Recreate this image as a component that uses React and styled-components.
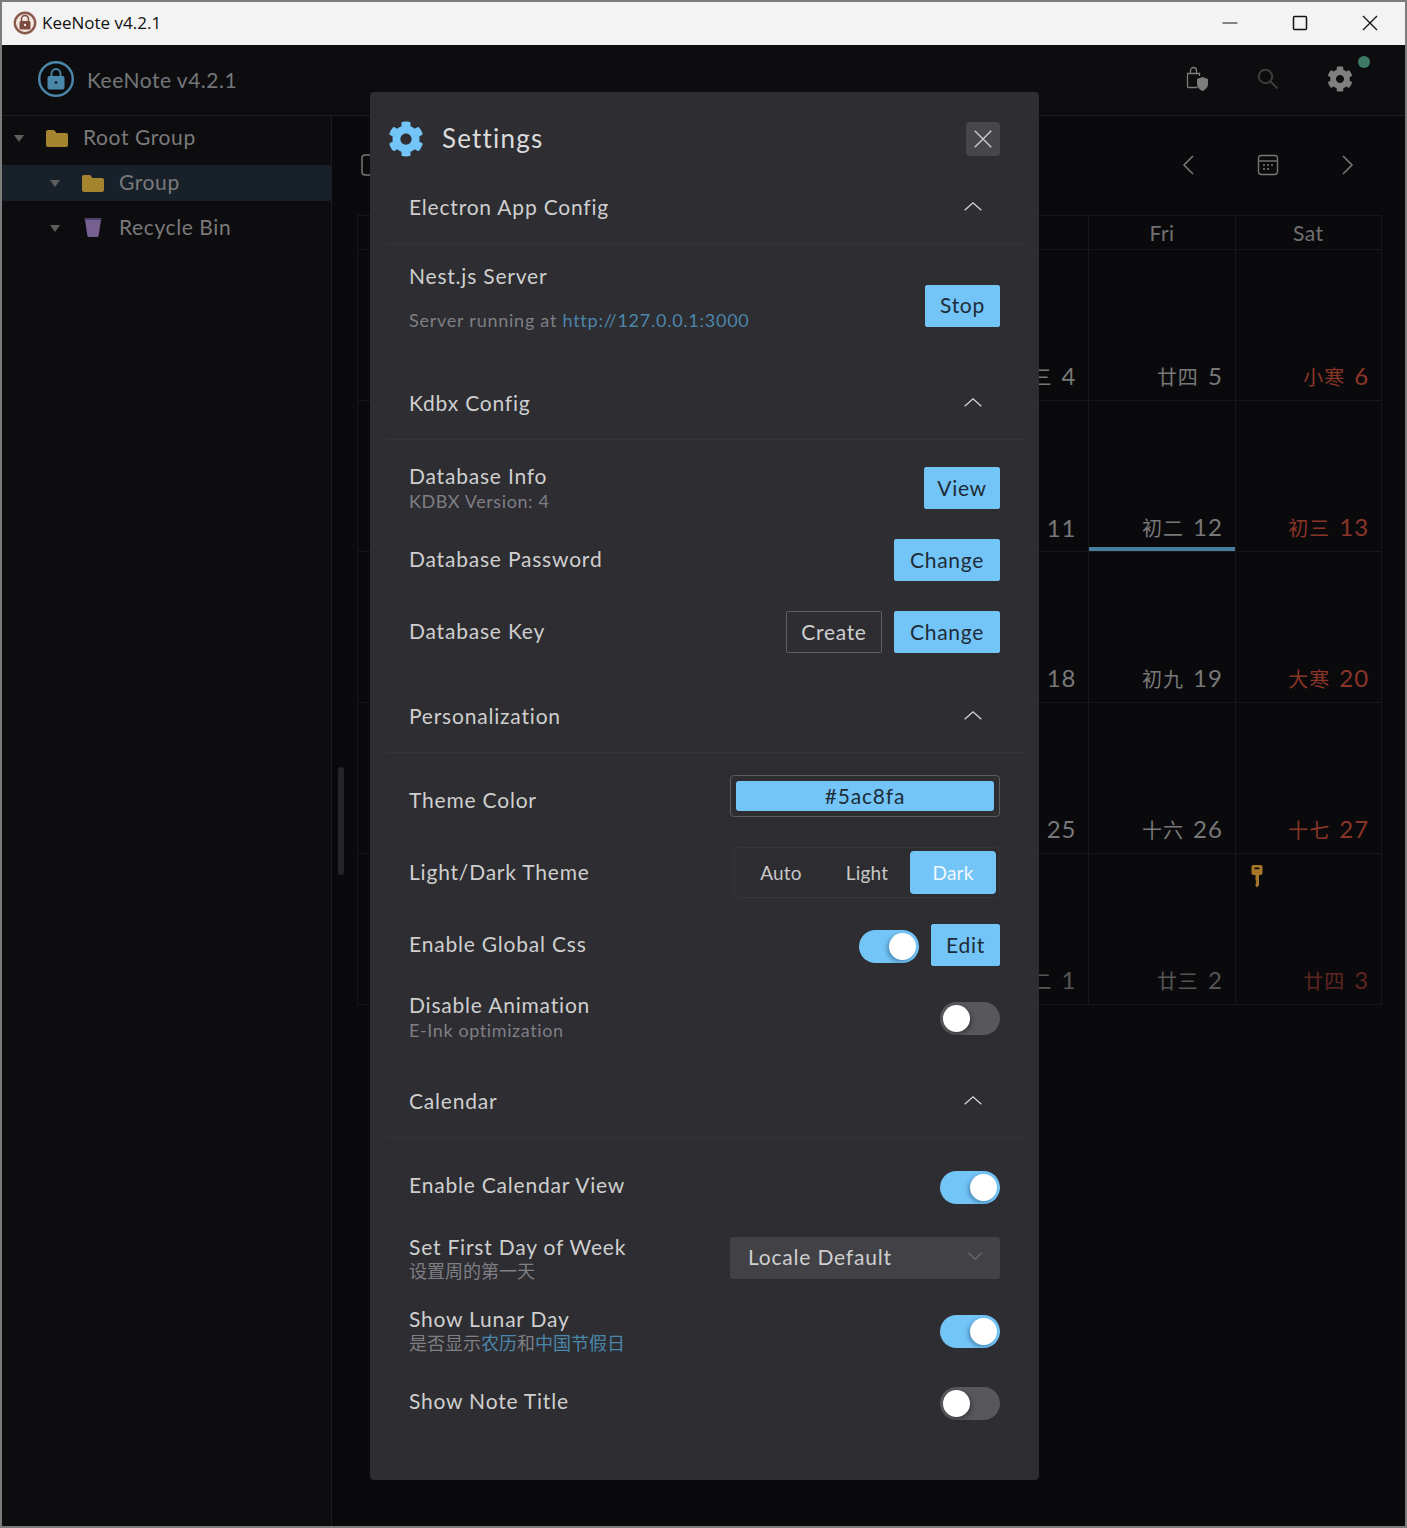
import React from 'react';
import styled, { createGlobalStyle } from 'styled-components';
import { AiOutlineSearch } from 'react-icons/ai';
import { FaCog } from 'react-icons/fa';

const FONT = `Lato, "Noto Sans CJK SC", sans-serif`;

const Global = createGlobalStyle`
  html, body { margin: 0; padding: 0; background: #0a0a0d; }
  * { box-sizing: border-box; }
`;

const Frame = styled.div`
  position: relative;
  width: 1407px;
  height: 1528px;
  border: 2px solid #7c7c7c;
  display: flex;
  flex-direction: column;
  overflow: hidden;
  font-family: ${FONT};
  background: #0a0a0d;
`;

const TitleBar = styled.div`
  height: 43px;
  flex: none;
  background: #f3f3f3;
  display: flex;
  align-items: center;
  padding: 0 0 2px 11px;
  color: #111;
  font: 17px "Open Sans", sans-serif;
`;
const TitleIcon = styled.svg`
  width: 24px;
  height: 24px;
  margin-right: 5px;
`;
const WinControls = styled.div`
  margin-left: auto;
  display: flex;
`;
const WinButton = styled.div`
  width: 70px;
  height: 41px;
  display: flex;
  align-items: center;
  justify-content: center;
  svg { display: block; }
`;

const AppHeader = styled.header`
  height: 71px;
  flex: none;
  background: #0d0d0f;
  border-bottom: 1px solid #1c1c1e;
  display: flex;
  align-items: center;
  padding: 0 40px 2px 35px;
`;
const Brand = styled.div`
  display: flex;
  align-items: center;
  gap: 12px;
  font-size: 21px;
  letter-spacing: 0.5px;
  color: #747779;
`;
const HeaderIcons = styled.div`
  margin-left: auto;
  display: flex;
  align-items: center;
  gap: 46px;
  margin-right: 12px;
`;
const HeaderIconBox = styled.div`
  position: relative;
  width: 26px;
  height: 26px;
  display: flex;
  align-items: center;
  justify-content: center;
  color: ${p => p.$color};
  font-size: ${p => p.$size}px;
`;
const StatusDot = styled.span`
  position: absolute;
  top: -10px;
  right: -17px;
  width: 12px;
  height: 12px;
  border-radius: 50%;
  background: #3d7a63;
`;

const Body = styled.div`
  flex: 1;
  display: flex;
  min-height: 0;
`;
const Sidebar = styled.aside`
  width: 330px;
  flex: none;
  background: #0d0d0f;
  border-right: 1px solid #1c1c1e;
  padding-top: 4px;
  display: flex;
  flex-direction: column;
  gap: 9px;
`;
const TreeRow = styled.div`
  height: 36px;
  display: flex;
  align-items: center;
  padding-left: ${p => 12 + p.$level * 36}px;
  background: ${p => (p.$active ? '#18202a' : 'transparent')};
  border-radius: 0 2px 2px 0;
  color: #7a7a7a;
  font-size: 21px;
  letter-spacing: 0.6px;
  line-height: 34px;
`;
const TreeLabel = styled.span`
  margin-top: -3px;
`;
const TreeArrow = styled.span`
  width: 0;
  height: 0;
  border-left: 5px solid transparent;
  border-right: 5px solid transparent;
  border-top: 7px solid #5e5e5e;
  margin-right: 21px;
`;
const TreeIcon = styled.svg`
  width: 24px;
  height: 22px;
  margin-right: 14px;
  flex: none;
`;

const Handle = styled.div`
  position: absolute;
  left: 336px;
  top: 765px;
  width: 6px;
  height: 108px;
  border-radius: 3px;
  background: #262628;
`;

const Main = styled.main`
  flex: 1;
  min-width: 0;
  padding: 0 23px 0 25px;
`;
const CalToolbar = styled.div`
  height: 99px;
  display: flex;
  align-items: center;
  justify-content: space-between;
  padding: 0 23px 2px 3px;
  color: #767676;
`;
const CalNav = styled.div`
  display: flex;
  align-items: center;
  gap: 55px;
`;
const NavIcon = styled.svg`
  width: 24px;
  height: 24px;
  display: block;
`;
const Grid = styled.div`
  display: grid;
  grid-template-columns: repeat(7, 1fr);
  grid-template-rows: 34px repeat(5, 151px);
  border-left: 1px solid #17171a;
  border-top: 1px solid #17171a;
`;
const WeekDay = styled.div`
  display: flex;
  align-items: center;
  justify-content: center;
  padding-bottom: 1px;
  border-right: 1px solid #17171a;
  border-bottom: 1px solid #17171a;
  color: #707070;
  font-size: 21px;
  letter-spacing: 0.5px;
`;
const Cell = styled.div`
  position: relative;
  display: flex;
  flex-direction: column;
  padding: 10px 12px 8px 15px;
  border-right: 1px solid #17171a;
  border-bottom: 1px solid #17171a;
`;
const TodayBar = styled.span`
  position: absolute;
  left: 0;
  right: 0;
  bottom: 0;
  height: 4px;
  background: #477d9f;
`;
const DateLabel = styled.div`
  margin-top: auto;
  text-align: right;
  font-size: 24px;
  line-height: 30px;
  letter-spacing: 0.9px;
  color: ${p => (p.$weekend ? (p.$dim ? '#5e2620' : '#8b3528') : p.$dim ? '#565656' : '#787878')};
`;
const Lunar = styled.span`
  font-size: 20px;
  margin-right: 9px;
  letter-spacing: 1px;
`;
const KeyIcon = styled.svg`
  width: 12px;
  height: 24px;
  display: block;
`;

const Modal = styled.section`
  position: absolute;
  left: 368px;
  top: 90px;
  width: 669px;
  height: 1388px;
  background: #2d2d32;
  border-radius: 4px;
  padding: 0 15px;
  color: #cfcfcf;
  font-size: 21px;
  letter-spacing: 0.8px;
`;
const ModalHead = styled.div`
  display: flex;
  align-items: center;
  height: 79px;
  padding: 30px 24px 15px 3px;
`;
const ModalTitle = styled.h2`
  margin: -2px 0 0 18px;
  font-weight: 400;
  font-size: 26px;
  letter-spacing: 1.2px;
  color: #dcdcdc;
`;
const GearBlue = styled(FaCog)`
  color: #74c5f7;
  font-size: 36px;
`;
const CloseBtn = styled.button`
  margin-left: auto;
  width: 34px;
  height: 34px;
  border: 0;
  border-radius: 4px;
  background: #46464b;
  display: flex;
  align-items: center;
  justify-content: center;
  padding: 0;
`;
const SectionHead = styled.div`
  height: 73px;
  border-bottom: 1px solid #343438;
  display: flex;
  align-items: center;
  justify-content: space-between;
  padding: 0 41px 1px 24px;
`;
const SectionBody = styled.div`
  padding: 27px 24px 27px 24px;
  display: flex;
  flex-direction: column;
  gap: 30px;
`;
const Row = styled.div`
  height: ${p => p.$h || 42}px;
  display: flex;
  align-items: center;
  justify-content: space-between;
`;
const Labels = styled.div`
  display: flex;
  flex-direction: column;
  margin-bottom: ${p => p.$lift || 0}px;
`;
const Label = styled.div`
  line-height: 24px;
  margin-top: ${p => (p.$plain ? -3 : 0)}px;
`;
const Sub = styled.div`
  font-size: 18px;
  line-height: 22px;
  letter-spacing: ${p => (p.$ls === undefined ? 0.6 : p.$ls)}px;
  color: #7f7f84;
  margin-top: ${p => p.$gap || 2}px;
`;
const Link = styled.span`
  color: #4c86aa;
`;
const Actions = styled.div`
  display: flex;
  align-items: center;
  gap: 12px;
`;
const Button = styled.button`
  height: 42px;
  width: ${p => p.$w}px;
  padding: 0 0 2px;
  border-radius: 2px;
  font: inherit;
  letter-spacing: 0.7px;
  color: ${p => (p.$outline ? '#cfcfcf' : '#1d2c37')};
  background: ${p => (p.$outline ? 'transparent' : '#74c5f7')};
  border: 1px solid ${p => (p.$outline ? '#5d5d62' : '#74c5f7')};
`;
const ColorField = styled.div`
  width: 270px;
  height: 42px;
  margin-top: -10px;
  padding: 5px;
  border: 1px solid #5b5b60;
  border-radius: 4px;
`;
const ColorSwatch = styled.div`
  height: 100%;
  padding-bottom: 2px;
  background: #74c5f7;
  border-radius: 3px;
  color: #1d2c37;
  display: flex;
  align-items: center;
  justify-content: center;
`;
const Segmented = styled.div`
  width: 266px;
  height: 51px;
  flex: none;
  margin: -5px 0 -4px;
  padding: 3px;
  border: 1px solid #36363a;
  border-radius: 4px;
  display: flex;
  background: #2c2c31;
  font-size: 19px;
  letter-spacing: 0.2px;
`;
const Segment = styled.div`
  flex: 1;
  border-radius: 4px;
  display: flex;
  align-items: center;
  justify-content: center;
  background: ${p => (p.$active ? '#74c5f7' : 'transparent')};
  color: ${p => (p.$active ? '#f0f8fd' : '#c8c8c8')};
`;
const Switch = styled.div`
  width: 60px;
  height: 33px;
  margin-top: 3px;
  border-radius: 17px;
  padding: 3px;
  display: flex;
  justify-content: ${p => (p.$on ? 'flex-end' : 'flex-start')};
  background: ${p => (p.$on ? '#74c5f7' : '#57575c')};
`;
const Knob = styled.span`
  width: 27px;
  height: 27px;
  border-radius: 50%;
  background: #fff;
  box-shadow: ${p => (p.$on ? '-2px 2px 4px rgba(0,40,70,.35)' : '2px 2px 4px rgba(0,0,0,.3)')};
`;
const Select = styled.div`
  width: 270px;
  height: 42px;
  border-radius: 3px;
  background: #414146;
  display: flex;
  align-items: center;
  justify-content: space-between;
  padding: 0 17px 4px 18px;
`;

const Stroke = ({ d, size = 24, w = 1.6, color = 'currentColor' }) => (
  <svg width={size} height={size} viewBox="0 0 24 24" fill="none" stroke={color} strokeWidth={w}>
    <path d={d} />
  </svg>
);

const Folder = () => (
  <TreeIcon viewBox="0 0 24 22">
    <path fill="#a5842f" d="M1 5a2 2 0 0 1 2-2h6l2.500 3H21a2 2 0 0 1 2 2v10a2 2 0 0 1-2 2H3a2 2 0 0 1-2-2z" />
  </TreeIcon>
);
const Bin = () => (
  <TreeIcon viewBox="0 0 24 22">
    <path fill="#4f3f6e" d="M3.500 1h17v2h-17z" />
    <path fill="#75608f" d="M4 3h16l-2.300 15.500a2 2 0 0 1-2 1.500H8.300a2 2 0 0 1-2-1.500z" />
  </TreeIcon>
);

const Toggle = ({ on }) => (
  <Switch $on={on}>
    <Knob $on={on} />
  </Switch>
);

const Section = ({ title, children }) => (
  <>
    <SectionHead>
      <span>{title}</span>
      <Stroke d="M2 16 L12 7 L22 16" size={20} w={1.5} color="#d8d8d8" />
    </SectionHead>
    <SectionBody>{children}</SectionBody>
  </>
);

const WEEK = ['Sun', 'Mon', 'Tue', 'Wed', 'Thu', 'Fri', 'Sat'];
const DAYS = [
  ['二十', 31, 1], ['元旦', 1], ['廿一', 2], ['廿二', 3], ['廿三', 4], ['廿四', 5], ['小寒', 6],
  ['廿六', 7], ['廿七', 8], ['廿八', 9], ['廿九', 10], ['', 11], ['初二', 12], ['初三', 13],
  ['初四', 14], ['初五', 15], ['初六', 16], ['初七', 17], ['初八', 18], ['初九', 19], ['大寒', 20],
  ['十一', 21], ['十二', 22], ['十三', 23], ['十四', 24], ['十五', 25], ['十六', 26], ['十七', 27],
  ['十八', 28], ['十九', 29], ['二十', 30], ['廿一', 31], ['廿二', 1, 1], ['廿三', 2, 1], ['廿四', 3, 1],
];

export default function App() {
  return (
    <>
      <Global />
      <Frame>
        <TitleBar>
          <TitleIcon viewBox="0 0 24 24">
            <circle cx="12" cy="12" r="10.200" fill="#f2e6df" stroke="#8a5a4c" strokeWidth="2.400" />
            <path d="M8.500 10V8a3.500 3.500 0 0 1 7 0v2" fill="none" stroke="#7d4c40" strokeWidth="1.500" />
            <rect x="6.500" y="10" width="11" height="8.500" rx="1.500" fill="#7d4c40" />
            <circle cx="12" cy="14" r="1.200" fill="#f2e6df" />
          </TitleIcon>
          KeeNote v4.2.1
          <WinControls>
            <WinButton>
              <svg width="16" height="16" viewBox="0 0 16 16"><path d="M0.500 8h15" stroke="#111" strokeWidth="1" /></svg>
            </WinButton>
            <WinButton>
              <svg width="16" height="16" viewBox="0 0 16 16"><rect x="1.500" y="1.500" width="13" height="13" rx="1" fill="none" stroke="#111" strokeWidth="1.500" /></svg>
            </WinButton>
            <WinButton>
              <svg width="16" height="16" viewBox="0 0 16 16"><path d="M1 1l14 14M15 1L1 15" stroke="#111" strokeWidth="1.300" /></svg>
            </WinButton>
          </WinControls>
        </TitleBar>

        <AppHeader>
          <Brand>
            <svg width="38" height="38" viewBox="0 0 38 38">
              <circle cx="19" cy="19" r="16.800" fill="none" stroke="#4a87ab" strokeWidth="2.400" />
              <path d="M14.500 17v-3.500a4.500 4.500 0 0 1 9 0V17" fill="none" stroke="#4a87ab" strokeWidth="1.800" />
              <rect x="10.500" y="16" width="17" height="13.500" rx="2" fill="#4a87ab" />
              <circle cx="19" cy="22.500" r="1.300" fill="#0d0d0f" />
            </svg>
            KeeNote v4.2.1
          </Brand>
          <HeaderIcons>
            <HeaderIconBox $color="#7c7c7c">
              <svg width="26" height="26" viewBox="0 0 26 26" fill="none">
                <path d="M14.500 21.500H5.500a1 1 0 0 1-1-1V7.500h12V10" stroke="currentColor" strokeWidth="1.300" />
                <path d="M7.500 7.500V4.500a3 3 0 0 1 6 0v3" stroke="currentColor" strokeWidth="1.300" />
                <path fill="currentColor" d="M19.500 11l5.500 2v5c0 3.500-2.500 5.500-5.500 7-3-1.500-5.500-3.500-5.500-7v-5z" />
              </svg>
            </HeaderIconBox>
            <HeaderIconBox $color="#3f3f3f" $size={26}>
              <AiOutlineSearch />
            </HeaderIconBox>
            <HeaderIconBox $color="#808080" $size={26}>
              <FaCog />
              <StatusDot />
            </HeaderIconBox>
          </HeaderIcons>
        </AppHeader>

        <Body>
          <Sidebar>
            <TreeRow $level={0}>
              <TreeArrow />
              <Folder />
              <TreeLabel>Root Group</TreeLabel>
            </TreeRow>
            <TreeRow $level={1} $active>
              <TreeArrow />
              <Folder />
              <TreeLabel>Group</TreeLabel>
            </TreeRow>
            <TreeRow $level={1}>
              <TreeArrow />
              <Bin />
              <TreeLabel>Recycle Bin</TreeLabel>
            </TreeRow>
          </Sidebar>
          <Handle />
          <Main>
            <CalToolbar>
              <NavIcon viewBox="0 0 24 24" fill="none" stroke="currentColor" strokeWidth="1.500">
                <rect x="2" y="2" width="20" height="20" rx="3" />
              </NavIcon>
              <CalNav>
                <NavIcon viewBox="0 0 24 24" fill="none" stroke="currentColor" strokeWidth="1.600">
                  <path d="M16 3 L7 12 L16 21" />
                </NavIcon>
                <NavIcon viewBox="0 0 24 24" fill="none" stroke="currentColor" strokeWidth="1.400">
                  <rect x="2.500" y="2.500" width="19" height="19" rx="3" />
                  <path d="M2.500 8h19" />
                  <g fill="currentColor" stroke="none">
                    <circle cx="8" cy="12" r="1.100" /><circle cx="12" cy="12" r="1.100" /><circle cx="16" cy="12" r="1.100" />
                    <circle cx="8" cy="16" r="1.100" /><circle cx="12" cy="16" r="1.100" />
                  </g>
                </NavIcon>
                <NavIcon viewBox="0 0 24 24" fill="none" stroke="currentColor" strokeWidth="1.600">
                  <path d="M8 3 L17 12 L8 21" />
                </NavIcon>
              </CalNav>
            </CalToolbar>
            <Grid>
              {WEEK.map(w => (
                <WeekDay key={w}>{w}</WeekDay>
              ))}
              {DAYS.map(([lunar, n, dim], i) => (
                <Cell key={i}>
                  {i === 34 && (
                    <KeyIcon viewBox="0 0 12 24">
                      <path fill="#a8782a" fillRule="evenodd" d="M2.500 1h7A2 2 0 0 1 11.500 3v6a2 2 0 0 1-2 2H8v10l-2 2.500-1.500-2v-1.500l1-1-1-1 1-1-1-1V11h-2a2 2 0 0 1-2-2V3a2 2 0 0 1 2-2zM3.500 3.500v1.800h5V3.500z" />
                    </KeyIcon>
                  )}
                  <DateLabel $weekend={i % 7 === 6} $dim={!!dim}>
                    {lunar && <Lunar>{lunar}</Lunar>}
                    {n}
                  </DateLabel>
                  {n === 12 && !dim && <TodayBar />}
                </Cell>
              ))}
            </Grid>
          </Main>
        </Body>

        <Modal>
          <ModalHead>
            <GearBlue />
            <ModalTitle>Settings</ModalTitle>
            <CloseBtn>
              <Stroke d="M3 3 L21 21 M21 3 L3 21" size={22} w={1.7} color="#c4c4c4" />
            </CloseBtn>
          </ModalHead>

          <Section title="Electron App Config">
            <Row $h={69}>
              <Labels $lift={17}>
                <Label>Nest.js Server</Label>
                <Sub $gap={21} $ls={0.75}>
                  Server running at <Link>http://127.0.0.1:3000</Link>
                </Sub>
              </Labels>
              <Button $w={75}>Stop</Button>
            </Row>
          </Section>

          <Section title="Kdbx Config">
            <Row>
              <Labels>
                <Label>Database Info</Label>
                <Sub>KDBX Version: 4</Sub>
              </Labels>
              <Button $w={76}>View</Button>
            </Row>
            <Row>
              <Label $plain>Database Password</Label>
              <Button $w={106}>Change</Button>
            </Row>
            <Row>
              <Label $plain>Database Key</Label>
              <Actions>
                <Button $outline $w={96}>Create</Button>
                <Button $w={106}>Change</Button>
              </Actions>
            </Row>
          </Section>

          <Section title="Personalization">
            <Row>
              <Label $plain>Theme Color</Label>
              <ColorField>
                <ColorSwatch>#5ac8fa</ColorSwatch>
              </ColorField>
            </Row>
            <Row>
              <Label $plain>Light/Dark Theme</Label>
              <Segmented>
                <Segment>Auto</Segment>
                <Segment>Light</Segment>
                <Segment $active>Dark</Segment>
              </Segmented>
            </Row>
            <Row>
              <Label $plain>Enable Global Css</Label>
              <Actions>
                <Toggle on />
                <Button $w={69}>Edit</Button>
              </Actions>
            </Row>
            <Row>
              <Labels>
                <Label>Disable Animation</Label>
                <Sub>E-Ink optimization</Sub>
              </Labels>
              <Toggle />
            </Row>
          </Section>

          <Section title="Calendar">
            <Row>
              <Label $plain>Enable Calendar View</Label>
              <Toggle on />
            </Row>
            <Row>
              <Labels>
                <Label>Set First Day of Week</Label>
                <Sub $ls={0} $gap={1}>设置周的第一天</Sub>
              </Labels>
              <Select>
                Locale Default
                <Stroke d="M2 7 L12 17 L22 7" size={16} w={1.5} color="#8a8a8e" />
              </Select>
            </Row>
            <Row>
              <Labels>
                <Label>Show Lunar Day</Label>
                <Sub $ls={0} $gap={1}>
                  是否显示<Link>农历</Link>和<Link>中国节假日</Link>
                </Sub>
              </Labels>
              <Toggle on />
            </Row>
            <Row>
              <Label $plain>Show Note Title</Label>
              <Toggle />
            </Row>
          </Section>
        </Modal>
      </Frame>
    </>
  );
}
